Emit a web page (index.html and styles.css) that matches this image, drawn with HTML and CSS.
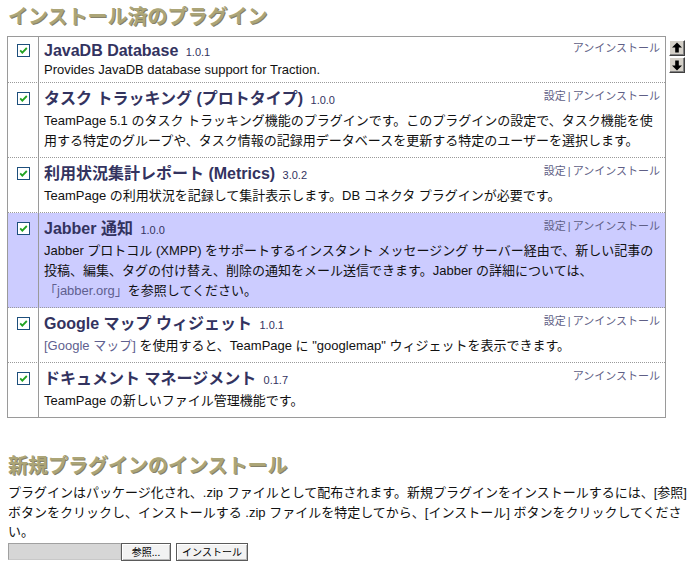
FILE: index.html
```html
<!DOCTYPE html>
<html lang="ja">
<head>
<meta charset="utf-8">
<title>プラグイン</title>
<link rel="stylesheet" href="styles.css">
</head>
<body>
<h2 class="section-title">インストール済のプラグイン</h2>
<div class="installed">
  <div class="plugin-list">
    <div class="plugin latin">
      <div class="check-cell"><svg class="check" viewBox="0 0 13 13" width="13" height="13"><rect x="0.5" y="0.5" width="12" height="12" fill="#fff" stroke="#1d4f7c"/><path d="M3.2 6.4 L5.3 8.6 L9.8 4" fill="none" stroke="#22a322" stroke-width="1.8"/></svg></div>
      <div class="info">
        <div class="actions"><a href="#">アンインストール</a></div>
        <div class="name">JavaDB Database <span class="ver">1.0.1</span></div>
        <div class="desc">Provides JavaDB database support for Traction.</div>
      </div>
    </div>
    <div class="plugin">
      <div class="check-cell"><svg class="check" viewBox="0 0 13 13" width="13" height="13"><rect x="0.5" y="0.5" width="12" height="12" fill="#fff" stroke="#1d4f7c"/><path d="M3.2 6.4 L5.3 8.6 L9.8 4" fill="none" stroke="#22a322" stroke-width="1.8"/></svg></div>
      <div class="info">
        <div class="actions"><a href="#">設定</a><span class="sep">|</span><a href="#">アンインストール</a></div>
        <div class="name">タスク トラッキング (プロトタイプ) <span class="ver">1.0.0</span></div>
        <div class="desc">TeamPage 5.1 のタスク トラッキング機能のプラグインです。このプラグインの設定で、タスク機能を使用する特定のグループや、タスク情報の記録用データベースを更新する特定のユーザーを選択します。</div>
      </div>
    </div>
    <div class="plugin">
      <div class="check-cell"><svg class="check" viewBox="0 0 13 13" width="13" height="13"><rect x="0.5" y="0.5" width="12" height="12" fill="#fff" stroke="#1d4f7c"/><path d="M3.2 6.4 L5.3 8.6 L9.8 4" fill="none" stroke="#22a322" stroke-width="1.8"/></svg></div>
      <div class="info">
        <div class="actions"><a href="#">設定</a><span class="sep">|</span><a href="#">アンインストール</a></div>
        <div class="name">利用状況集計レポート (Metrics) <span class="ver">3.0.2</span></div>
        <div class="desc">TeamPage の利用状況を記録して集計表示します。DB コネクタ プラグインが必要です。</div>
      </div>
    </div>
    <div class="plugin current">
      <div class="check-cell"><svg class="check" viewBox="0 0 13 13" width="13" height="13"><rect x="0.5" y="0.5" width="12" height="12" fill="#fff" stroke="#1d4f7c"/><path d="M3.2 6.4 L5.3 8.6 L9.8 4" fill="none" stroke="#22a322" stroke-width="1.8"/></svg></div>
      <div class="info">
        <div class="actions"><a href="#">設定</a><span class="sep">|</span><a href="#">アンインストール</a></div>
        <div class="name">Jabber 通知 <span class="ver">1.0.0</span></div>
        <div class="desc">Jabber プロトコル (XMPP) をサポートするインスタント メッセージング サーバー経由で、新しい記事の投稿、編集、タグの付け替え、削除の通知をメール送信できます。Jabber の詳細については、<a href="#">「jabber.org」</a>を参照してください。</div>
      </div>
    </div>
    <div class="plugin">
      <div class="check-cell"><svg class="check" viewBox="0 0 13 13" width="13" height="13"><rect x="0.5" y="0.5" width="12" height="12" fill="#fff" stroke="#1d4f7c"/><path d="M3.2 6.4 L5.3 8.6 L9.8 4" fill="none" stroke="#22a322" stroke-width="1.8"/></svg></div>
      <div class="info">
        <div class="actions"><a href="#">設定</a><span class="sep">|</span><a href="#">アンインストール</a></div>
        <div class="name">Google マップ ウィジェット <span class="ver">1.0.1</span></div>
        <div class="desc"><a href="#">[Google マップ]</a> を使用すると、TeamPage に "googlemap" ウィジェットを表示できます。</div>
      </div>
    </div>
    <div class="plugin">
      <div class="check-cell"><svg class="check" viewBox="0 0 13 13" width="13" height="13"><rect x="0.5" y="0.5" width="12" height="12" fill="#fff" stroke="#1d4f7c"/><path d="M3.2 6.4 L5.3 8.6 L9.8 4" fill="none" stroke="#22a322" stroke-width="1.8"/></svg></div>
      <div class="info">
        <div class="actions"><a href="#">アンインストール</a></div>
        <div class="name">ドキュメント マネージメント <span class="ver">0.1.7</span></div>
        <div class="desc">TeamPage の新しいファイル管理機能です。</div>
      </div>
    </div>
  </div>
  <div class="order-buttons">
    <button class="order-btn" type="button" aria-label="上へ"><svg viewBox="0 0 14 14" width="14" height="14"><path d="M7 1.5 L2 6.5 H5.2 V11.5 H8.8 V6.5 H12 Z" fill="#000"/></svg></button>
    <button class="order-btn" type="button" aria-label="下へ"><svg viewBox="0 0 14 14" width="14" height="14"><path d="M7 12.5 L2 7.5 H5.2 V2.5 H8.8 V7.5 H12 Z" fill="#000"/></svg></button>
  </div>
</div>

<h2 class="section-title new-title">新規プラグインのインストール</h2>
<p class="intro">プラグインはパッケージ化され、.zip ファイルとして配布されます。新規プラグインをインストールするには、[参照] ボタンをクリックし、インストールする .zip ファイルを特定してから、[インストール] ボタンをクリックしてください。</p>
<form class="upload">
  <input class="file-path" type="text">
  <button class="form-btn browse" type="button">参照...</button>
  <button class="form-btn install" type="button">インストール</button>
</form>
</body>
</html>
```

FILE: styles.css
```css
body {
  margin: 0;
  padding: 0 7px 0 8px;
  background: #fff;
  color: #111;
  font-family: "Liberation Sans", "Noto Sans CJK JP", sans-serif;
}

.section-title {
  margin: 4px 0 0;
  font-size: 20px;
  line-height: 26px;
  font-weight: bold;
  color: #aca577;
  text-shadow: 1px 1px 0 #85816a;
}

.installed {
  display: flex;
  align-items: flex-start;
  gap: 3px;
  margin: 6px 0 0 -1px;
}

.plugin-list {
  width: 659px;
  box-sizing: border-box;
  border: 1px solid #9a9a9a;
}

.plugin {
  --pt: 4px;
  --pb: 6px;
  --title-lh: 24px;
  display: flex;
  border-bottom: 1px dotted #9a9a9a;
}

.plugin:last-child {
  border-bottom: 0;
}

.plugin.latin {
  --pt: 5px;
  --pb: 2px;
  --title-lh: 18px;
}

.plugin.current {
  background: #ccccff;
}

.check-cell {
  flex: none;
  width: 30px;
  border-right: 1px solid #9a9a9a;
  display: flex;
  justify-content: center;
  align-items: flex-start;
  padding-top: calc(var(--pt) + (var(--title-lh) - 13px) / 2 - 1px);
}

.check {
  display: block;
}

.info {
  flex: 1;
  min-width: 0;
  padding: var(--pt) 5px var(--pb) 5px;
}

.actions {
  float: right;
  font-size: 11px;
  line-height: calc(var(--title-lh) - 5px);
  color: #5f5f86;
}

.actions a {
  color: #5f5f86;
  text-decoration: none;
}

.actions .sep {
  margin: 0 2px;
}

.name {
  font-size: 16px;
  font-weight: bold;
  line-height: var(--title-lh);
  color: #33335f;
}

.ver {
  margin-left: 3px;
  font-size: 11px;
  line-height: 1;
  font-weight: normal;
  color: #33335f;
}

.desc {
  font-size: 13px;
  line-height: 20px;
  color: #111;
}

.desc a {
  color: #5f5f8f;
  text-decoration: none;
}

.order-buttons {
  display: flex;
  flex-direction: column;
  gap: 1px;
  margin-top: 4px;
}

.order-btn {
  width: 16px;
  height: 16px;
  padding: 0;
  display: flex;
  align-items: center;
  justify-content: center;
  background: #d4d0c8;
  border: 1px solid;
  border-color: #fff #404040 #404040 #fff;
  box-shadow: inset -1px -1px 0 #808080;
}

.new-title {
  margin-top: 35px;
}

.intro {
  margin: 4px 0 0;
  font-size: 13px;
  line-height: 19.5px;
  color: #111;
}

.upload {
  display: flex;
  align-items: center;
  margin: 1px 0 0;
}

.file-path {
  box-sizing: border-box;
  width: 113px;
  height: 17px;
  margin: 0;
  padding: 0;
  background: #d6d6d6;
  border: 1px solid #a0a0a0;
  border-right-color: #c8c8c8;
  border-bottom-color: #c8c8c8;
}

.form-btn {
  box-sizing: border-box;
  height: 18px;
  margin: 0;
  padding: 0;
  font-family: "Noto Sans CJK JP", sans-serif;
  font-size: 10px;
  line-height: 14px;
  white-space: nowrap;
  color: #000;
  background: #f2f2f2;
  border: 1px solid #5a5a5a;
  box-shadow: inset 1px 1px 0 #fff, inset -1px -1px 0 #b8b8b8;
}

.browse {
  width: 50px;
}

.install {
  width: 72px;
  margin-left: 5px;
}
```
